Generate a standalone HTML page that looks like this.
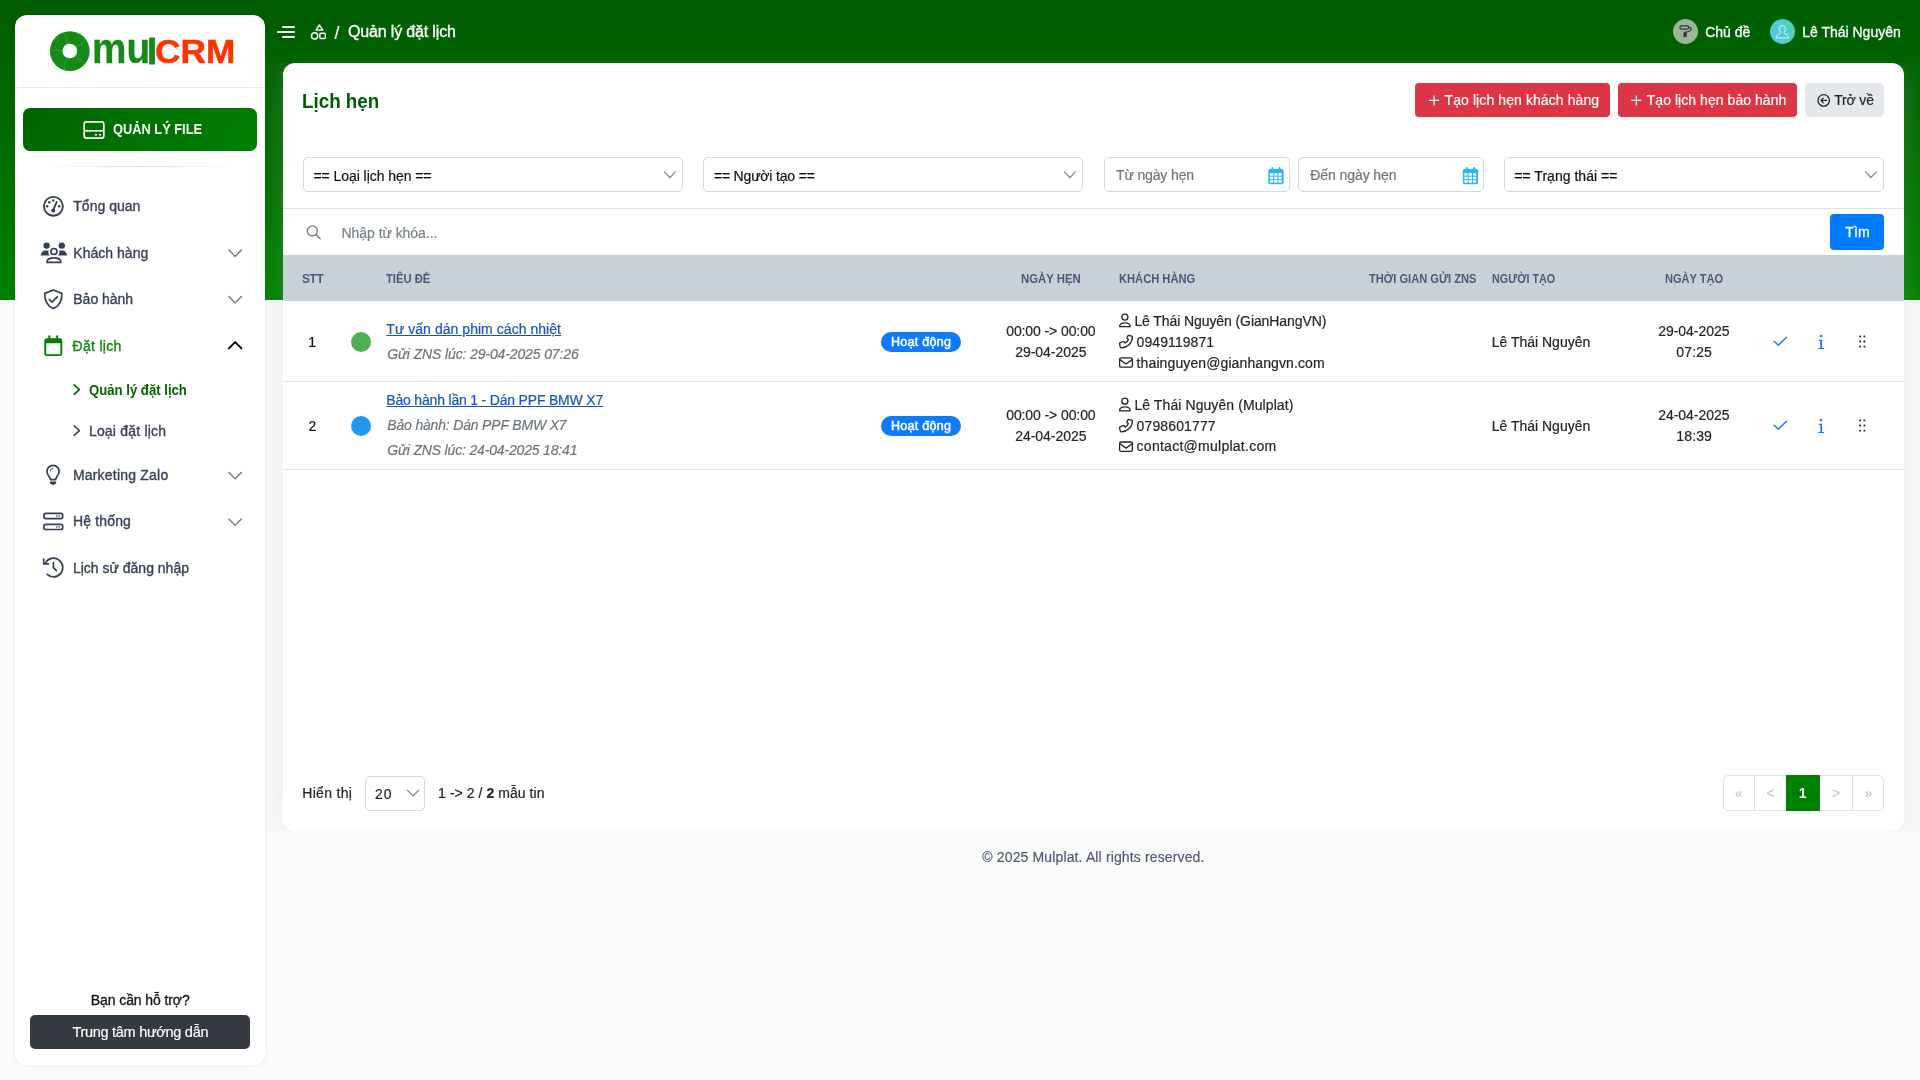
<!DOCTYPE html>
<html lang="vi">
<head>
<meta charset="utf-8">
<title>Quản lý đặt lịch - mulCRM</title>
<style>
html,body{margin:0;padding:0;}
body{width:1920px;height:1080px;overflow:hidden;background:#f8f9fa;position:relative;font-family:"Liberation Sans",sans-serif;}
.t{position:absolute;white-space:nowrap;line-height:20px;font-family:"Liberation Sans", sans-serif;}
.abs{position:absolute;}
#topbg{left:0;top:0;width:1920px;height:300px;background:linear-gradient(180deg,#005c00 0%,#006400 25%,#008000 100%);}
#sidebar{left:15px;top:15px;width:250px;height:1050px;background:#fff;border-radius:12px;box-shadow:0 0 4px 0 rgba(0,0,0,.07);}
#cardclip{left:243px;top:63px;width:1677px;height:768px;overflow:hidden;}
#card{left:40px;top:0;width:1621px;height:768px;background:#fff;border-radius:12px;box-shadow:0 0 32px 0 rgba(185,188,202,.22);}
.hr1{left:15px;top:87px;width:250px;height:1px;background:#e9ecef;}
.hr2{left:39px;top:166px;width:202px;height:1px;background:linear-gradient(90deg,rgba(0,0,0,0),rgba(0,0,0,.12),rgba(0,0,0,0));}
#filebtn{left:23px;top:108px;width:234px;height:43px;border-radius:7px;background:linear-gradient(310deg,#008000 0%,#006400 100%);}
#helpbtn{left:30px;top:1015px;width:220px;height:34px;border-radius:5px;background:#343a40;}
.btn-red{top:83px;height:34px;border-radius:4px;background:#dc3545;}
.btn-gray{left:1805px;top:83px;width:79px;height:34px;border-radius:5px;background:#e4e7ec;}
.inp{top:157px;height:33px;border:1px solid #d3d8de;border-radius:5px;background:#fff;}
.line{background:#dee2e6;height:1px;}
#thead{left:283px;top:255px;width:1621px;height:46.4px;background:#c8d0d8;}
.badge{left:881px;width:80px;height:20px;border-radius:10px;background:#0d7bfc;}
.dot{left:351px;width:20px;height:20px;border-radius:50%;}
#findbtn{left:1830px;top:214px;width:54px;height:36px;border-radius:4px;background:#007bff;}
#psel{left:365px;top:776px;width:58px;height:33px;border:1px solid #d3d8de;border-radius:5px;background:#fff;}
#pager{left:1723px;top:775px;width:159px;height:34px;border:1px solid #dee2e6;border-radius:5px;background:#fff;}
.pv{top:775px;width:1px;height:36px;background:#dee2e6;}
#pcur{left:1786px;top:775px;width:34px;height:36px;background:#008000;}
.av{top:19px;width:25px;height:25px;border-radius:50%;}
svg{position:absolute;overflow:visible;}
</style>
</head>
<body>
<div id="topbg" class="abs"></div>
<div id="cardclip" class="abs"><main id="card" class="abs"></main></div>

<!-- ================= SIDEBAR ================= -->
<aside id="sidebar" class="abs"></aside>
<div class="abs hr1"></div>
<div class="abs hr2"></div>
<div id="filebtn" class="abs"></div>
<div id="helpbtn" class="abs"></div>


<!-- ================= TOP NAV ================= -->
<div class="abs av" style="left:1673px;background:#9bb598;"></div>
<div class="abs av" style="left:1770px;background:linear-gradient(90deg,#4fc6ea 0%,#4fd2b9 100%);"></div>


<!-- ================= MAIN CARD ================= -->
<div class="abs btn-red" style="left:1415px;width:195px;"></div>
<div class="abs btn-red" style="left:1618px;width:179px;"></div>
<div class="abs btn-gray"></div>
<div class="abs inp" style="left:303px;width:378px;"></div>
<div class="abs inp" style="left:703px;width:378px;"></div>
<div class="abs inp" style="left:1103.5px;width:184px;"></div>
<div class="abs inp" style="left:1298px;width:184px;"></div>
<div class="abs inp" style="left:1504px;width:378px;"></div>
<div class="abs line" style="left:283px;top:208px;width:1621px;"></div>
<div id="findbtn" class="abs"></div>
<div id="thead" class="abs"></div>
<div class="abs line" style="left:283px;top:381px;width:1621px;"></div>
<div class="abs line" style="left:283px;top:469px;width:1621px;"></div>
<div class="abs dot" style="top:332px;background:#4caf50;"></div>
<div class="abs dot" style="top:416px;background:#2196f3;"></div>
<div class="abs badge" style="top:332px;"></div>
<div class="abs badge" style="top:416px;"></div>
<div id="psel" class="abs"></div>
<div id="pager" class="abs"></div>
<div class="abs pv" style="left:1754px;"></div>
<div class="abs pv" style="left:1852px;"></div>
<div id="pcur" class="abs"></div>
<svg width="1920" height="1080" viewBox="0 0 1920 1080" style="left:0;top:0;">
<g id="logo">
<circle cx="69.8" cy="51.1" r="19.9" fill="#168a16"/>
<path d="M68.48 43.62 A11 11 0 0 0 85.25 39.03" fill="none" stroke="#7fd07f" stroke-opacity=".55" stroke-width=".5"/>
<path d="M76.51 47.53 A11 11 0 0 0 86.05 62.06" fill="none" stroke="#7fd07f" stroke-opacity=".55" stroke-width=".5"/>
<path d="M75.27 56.38 A11 11 0 0 0 64.40 69.94" fill="none" stroke="#7fd07f" stroke-opacity=".55" stroke-width=".5"/>
<path d="M66.47 57.93 A11 11 0 0 0 50.21 51.78" fill="none" stroke="#7fd07f" stroke-opacity=".55" stroke-width=".5"/>
<path d="M62.27 50.04 A11 11 0 0 0 63.10 32.68" fill="none" stroke="#7fd07f" stroke-opacity=".55" stroke-width=".5"/>
<circle cx="69.8" cy="51" r="7.3" fill="#fff"/>
</g>
<g id="side-icons">
<g fill="none" stroke="#fff" stroke-width="1.7" stroke-linejoin="round"><rect x="84.2" y="121.9" width="19.6" height="16.2" rx="2.2"/><path d="M84.2 130.8H103.8"/></g>
<g fill="#fff"><rect x="94.9" y="133.9" width="2.1" height="1.7" rx=".4"/><rect x="98.9" y="133.9" width="2.1" height="1.7" rx=".4"/></g>
<g fill="none" stroke="#363f56" stroke-width="1.9" stroke-linecap="round"><circle cx="53.4" cy="206.3" r="9.45"/><path d="M53.3 210.2L56.6 202.0"/></g>
<g fill="#363f56"><circle cx="53.2" cy="210.4" r="2"/><circle cx="47.2" cy="206.3" r="1.25"/><circle cx="49.3" cy="202.2" r="1.25"/><circle cx="53.2" cy="200.5" r="1.25"/><circle cx="59.2" cy="206.2" r="1.25"/></g>
<g fill="#363f56"><circle cx="46.6" cy="245.6" r="3.2"/><circle cx="61.8" cy="245.6" r="3.2"/><path d="M40.8 255.6 C40.8 252.4 43 250.4 45.8 250.4 H48.6 C48.2 251.8 48.4 253.8 49.7 255.6 Z"/><path d="M67 255.6 C67 252.4 64.8 250.4 62 250.4 H59.2 C59.6 251.8 59.4 253.8 58.1 255.6 Z"/></g>
<g fill="none" stroke="#363f56" stroke-width="1.7" stroke-linejoin="round"><circle cx="53.9" cy="251.5" r="3"/><path d="M46.9 262.4 C46.9 259.4 49.6 257.8 53.9 257.8 C58.2 257.8 60.9 259.4 60.9 262.4 Z"/></g>
<g fill="none" stroke="#363f56" stroke-width="1.7" stroke-linejoin="round" stroke-linecap="round"><path d="M53.3 290 L61.9 293.4 C62.1 300.5 59 306 53.3 308.6 C47.6 306 44.5 300.5 44.7 293.4 Z"/><path d="M49.3 299.5 L52 302.1 L57.5 296.6"/></g>
<path fill-rule="evenodd" fill="#008000" d="M46.8 338.3 H59.8 A2.5 2.5 0 0 1 62.3 340.8 V353.5 A2.5 2.5 0 0 1 59.8 356 H46.8 A2.5 2.5 0 0 1 44.3 353.5 V340.8 A2.5 2.5 0 0 1 46.8 338.3 Z M46.2 343.2 V353.4 A.8 .8 0 0 0 47 354.2 H59.6 A.8 .8 0 0 0 60.4 353.4 V343.2 Z"/>
<g stroke="#008000" stroke-width="1.9" stroke-linecap="round"><path d="M49.3 336.2V339"/><path d="M57.2 336.2V339"/></g>
<g fill="none" stroke="#363f56" stroke-width="1.7" stroke-linejoin="round" stroke-linecap="round"><path d="M50.4 479.6 C50.4 476.8 47 475.4 47 471.4 A6.05 6.05 0 0 1 59.1 471.4 C59.1 475.4 55.7 476.8 55.7 479.6 Z"/></g>
<path fill="none" stroke="#363f56" stroke-width="1.0" stroke-linecap="round" d="M50.2 471.2 A2.9 2.9 0 0 1 53 468.4"/>
<path fill="#363f56" d="M49.8 481.6 H56.3 C56.3 483.8 54.9 484.9 53.05 484.9 C51.2 484.9 49.8 483.8 49.8 481.6 Z"/>
<g fill="none" stroke="#363f56" stroke-width="1.7"><rect x="43.9" y="513.4" width="18.8" height="5.2" rx="2"/><rect x="43.9" y="524.3" width="18.8" height="5.2" rx="2"/></g>
<g fill="#363f56"><rect x="56" y="515.4" width="1.6" height="1.2"/><rect x="58.4" y="515.4" width="1.6" height="1.2"/><rect x="56" y="526.3" width="1.6" height="1.2"/><rect x="58.4" y="526.3" width="1.6" height="1.2"/></g>
<g fill="none" stroke="#363f56" stroke-width="1.7" stroke-linecap="round" stroke-linejoin="round"><path d="M45.6 562.6 A9.3 9.3 0 1 1 47.2 574.4"/><path d="M43.7 559.2 V563.9 H48.4"/><path d="M53.4 562.7 V567.6 L56.4 570.6"/></g>
<path d="M228.90 250.10 L235.15 256.40 L241.40 250.10" fill="none" stroke="#747a81" stroke-width="1.4" stroke-linecap="round" stroke-linejoin="round"/>
<path d="M228.90 296.60 L235.15 302.90 L241.40 296.60" fill="none" stroke="#747a81" stroke-width="1.4" stroke-linecap="round" stroke-linejoin="round"/>
<path d="M228.90 472.40 L235.15 478.70 L241.40 472.40" fill="none" stroke="#747a81" stroke-width="1.4" stroke-linecap="round" stroke-linejoin="round"/>
<path d="M228.90 518.90 L235.15 525.20 L241.40 518.90" fill="none" stroke="#747a81" stroke-width="1.4" stroke-linecap="round" stroke-linejoin="round"/>
<path d="M228.90 348.40 L235.15 342.10 L241.40 348.40" fill="none" stroke="#000" stroke-width="1.9" stroke-linecap="round" stroke-linejoin="round"/>
<path d="M74.20 384.80 L79.40 389.60 L74.20 394.40" fill="none" stroke="#006400" stroke-width="1.6" stroke-linecap="round" stroke-linejoin="round"/>
<path d="M74.20 425.80 L79.40 430.60 L74.20 435.40" fill="none" stroke="#363f56" stroke-width="1.5" stroke-linecap="round" stroke-linejoin="round"/>
</g>
<g id="top-icons">
<g stroke="#fff" stroke-width="2" stroke-linecap="round"><path d="M283 26.9H294"/><path d="M278 31.9H294"/><path d="M283 36.9H294"/></g>
<g fill="none" stroke="#fff" stroke-width="1.45" stroke-linejoin="round"><path d="M319.4 24.9 L322.8 30.1 H316 Z"/><circle cx="314.6" cy="35.9" r="3.1"/><rect x="319.9" y="33.2" width="5.4" height="5.2" rx="1"/></g>
<g fill="none" stroke="#343a40" stroke-width="1.3" stroke-linejoin="round" stroke-linecap="round"><rect x="1680" y="25.8" width="8.6" height="3.4" rx="1.5"/><path d="M1688.6 27.3 C1691.2 27.3 1691.2 28.2 1691 30 C1690.8 31.4 1689 31.6 1685.1 32.2"/></g>
<rect x="1683.4" y="32.2" width="3.4" height="4.9" rx=".9" fill="#343a40"/>
<path fill="none" stroke="#fff" stroke-width=".8" stroke-linejoin="round" d="M1776.3 37.9 V36.6 C1776.3 35.2 1778 34.6 1780.2 33.6 C1780.8 33.3 1780.8 32.4 1780.4 31.9 C1779.6 30.9 1779.3 29.9 1779.3 28.7 A3.05 3.05 0 0 1 1785.4 28.7 C1785.4 29.9 1785.1 30.9 1784.3 31.9 C1783.9 32.4 1783.9 33.3 1784.5 33.6 C1786.7 34.6 1788.4 35.2 1788.4 36.6 V37.9 Z"/>
</g>
<g id="card-icons">
<path d="M1429.1 100.4H1439.1M1434.1 95.4V105.4" stroke="#fff" stroke-width="1.15" fill="none"/>
<path d="M1631.3 100.4H1641.3M1636.3 95.4V105.4" stroke="#fff" stroke-width="1.15" fill="none"/>
<g fill="none" stroke="#212529" stroke-width="1.3" stroke-linecap="round" stroke-linejoin="round"><circle cx="1823.7" cy="100.4" r="5.7"/><path d="M1826.6 100.4H1821M1823.2 98.1L1820.9 100.4L1823.2 102.7"/></g>
<path d="M664.40 171.90 L669.90 177.50 L675.40 171.90" fill="none" stroke="#80868d" stroke-width="1.2" stroke-linecap="round" stroke-linejoin="round"/>
<path d="M1064.40 171.90 L1069.90 177.50 L1075.40 171.90" fill="none" stroke="#80868d" stroke-width="1.2" stroke-linecap="round" stroke-linejoin="round"/>
<path d="M1865.40 171.90 L1870.90 177.50 L1876.40 171.90" fill="none" stroke="#80868d" stroke-width="1.2" stroke-linecap="round" stroke-linejoin="round"/>
<path d="M407.60 790.20 L413.10 796.00 L418.60 790.20" fill="none" stroke="#868c93" stroke-width="1.25" stroke-linecap="round" stroke-linejoin="round"/>
<g transform="translate(1268.3 167)"><rect x="0" y="2" width="15.3" height="15.3" rx="1.8" fill="#29b6f6"/><rect x="3.1" y="0" width="1.9" height="4" rx=".9" fill="#29b6f6"/><rect x="10.3" y="0" width="1.9" height="4" rx=".9" fill="#29b6f6"/><rect x="1.60" y="6.20" width="3.3" height="2.5" fill="#fff"/><rect x="5.85" y="6.20" width="3.3" height="2.5" fill="#fff"/><rect x="10.10" y="6.20" width="3.3" height="2.5" fill="#fff"/><rect x="1.60" y="9.70" width="3.3" height="2.5" fill="#fff"/><rect x="5.85" y="9.70" width="3.3" height="2.5" fill="#fff"/><rect x="10.10" y="9.70" width="3.3" height="2.5" fill="#fff"/><rect x="1.60" y="13.20" width="3.3" height="2.5" fill="#fff"/><rect x="5.85" y="13.20" width="3.3" height="2.5" fill="#fff"/><rect x="10.10" y="13.20" width="3.3" height="2.5" fill="#fff"/></g>
<g transform="translate(1462.8 167)"><rect x="0" y="2" width="15.3" height="15.3" rx="1.8" fill="#29b6f6"/><rect x="3.1" y="0" width="1.9" height="4" rx=".9" fill="#29b6f6"/><rect x="10.3" y="0" width="1.9" height="4" rx=".9" fill="#29b6f6"/><rect x="1.60" y="6.20" width="3.3" height="2.5" fill="#fff"/><rect x="5.85" y="6.20" width="3.3" height="2.5" fill="#fff"/><rect x="10.10" y="6.20" width="3.3" height="2.5" fill="#fff"/><rect x="1.60" y="9.70" width="3.3" height="2.5" fill="#fff"/><rect x="5.85" y="9.70" width="3.3" height="2.5" fill="#fff"/><rect x="10.10" y="9.70" width="3.3" height="2.5" fill="#fff"/><rect x="1.60" y="13.20" width="3.3" height="2.5" fill="#fff"/><rect x="5.85" y="13.20" width="3.3" height="2.5" fill="#fff"/><rect x="10.10" y="13.20" width="3.3" height="2.5" fill="#fff"/></g>
<g fill="none" stroke="#6c757d" stroke-width="1.35" stroke-linecap="round"><circle cx="312.3" cy="230.9" r="5"/><path d="M315.9 234.6L320.2 238.7"/></g>
<g transform="translate(0 0)" fill="none" stroke="#212529" stroke-width="1.3" stroke-linejoin="round" stroke-linecap="round"><circle cx="1124.9" cy="317.1" r="3"/><path d="M1119.6 326.7 C1119.6 324 1121.6 322.8 1124.9 322.8 C1128.2 322.8 1130.2 324 1130.2 326.7 Z"/><path d="M1128.2 335.3 L1131.8 336.1 C1132.3 336.2 1132.5 336.6 1132.5 337 C1132.3 343.2 1127 347.7 1121.2 347.8 C1120.7 347.8 1120.4 347.5 1120.3 347.1 L1119.6 343.8 C1119.5 343.3 1119.7 342.9 1120.2 342.7 L1123.1 341.5 C1123.5 341.3 1124 341.4 1124.3 341.8 L1125.2 343 C1126.6 342.2 1127.7 341 1128.4 339.6 L1127.3 338.7 C1126.9 338.4 1126.8 337.9 1127 337.5 L1127.1 337.3 L1128.2 335.3 Z" transform="translate(0 0)"/><rect x="1119.6" y="357.9" width="12.8" height="9.3" rx="1.6"/><path d="M1119.9 359.6 L1126 364 L1132.1 359.6"/></g>
<g transform="translate(0 84.1)" fill="none" stroke="#212529" stroke-width="1.3" stroke-linejoin="round" stroke-linecap="round"><circle cx="1124.9" cy="317.1" r="3"/><path d="M1119.6 326.7 C1119.6 324 1121.6 322.8 1124.9 322.8 C1128.2 322.8 1130.2 324 1130.2 326.7 Z"/><path d="M1128.2 335.3 L1131.8 336.1 C1132.3 336.2 1132.5 336.6 1132.5 337 C1132.3 343.2 1127 347.7 1121.2 347.8 C1120.7 347.8 1120.4 347.5 1120.3 347.1 L1119.6 343.8 C1119.5 343.3 1119.7 342.9 1120.2 342.7 L1123.1 341.5 C1123.5 341.3 1124 341.4 1124.3 341.8 L1125.2 343 C1126.6 342.2 1127.7 341 1128.4 339.6 L1127.3 338.7 C1126.9 338.4 1126.8 337.9 1127 337.5 L1127.1 337.3 L1128.2 335.3 Z" transform="translate(0 0)"/><rect x="1119.6" y="357.9" width="12.8" height="9.3" rx="1.6"/><path d="M1119.9 359.6 L1126 364 L1132.1 359.6"/></g>
<g transform="translate(0 0)"><path d="M1774.2 341.3 L1778.3 345.3 L1786.5 337.2" fill="none" stroke="#0d7bfc" stroke-width="1.4" stroke-linecap="round" stroke-linejoin="round"/><circle cx="1821.1" cy="336.1" r="1.3" fill="#0d7bfc"/><path d="M1818.9 339.8 H1822 V347.9 H1824 V349 H1818.3 V347.9 H1820.3 V340.9 H1818.9 Z" fill="#0d7bfc"/><rect x="1859.2" y="335.4" width="1.8" height="1.8" rx=".5" fill="#222"/><rect x="1859.2" y="340.6" width="1.8" height="1.8" rx=".5" fill="#222"/><rect x="1859.2" y="345.7" width="1.8" height="1.8" rx=".5" fill="#222"/><rect x="1863.5" y="335.4" width="1.8" height="1.8" rx=".5" fill="#222"/><rect x="1863.5" y="340.6" width="1.8" height="1.8" rx=".5" fill="#222"/><rect x="1863.5" y="345.7" width="1.8" height="1.8" rx=".5" fill="#222"/></g>
<g transform="translate(0 84)"><path d="M1774.2 341.3 L1778.3 345.3 L1786.5 337.2" fill="none" stroke="#0d7bfc" stroke-width="1.4" stroke-linecap="round" stroke-linejoin="round"/><circle cx="1821.1" cy="336.1" r="1.3" fill="#0d7bfc"/><path d="M1818.9 339.8 H1822 V347.9 H1824 V349 H1818.3 V347.9 H1820.3 V340.9 H1818.9 Z" fill="#0d7bfc"/><rect x="1859.2" y="335.4" width="1.8" height="1.8" rx=".5" fill="#222"/><rect x="1859.2" y="340.6" width="1.8" height="1.8" rx=".5" fill="#222"/><rect x="1859.2" y="345.7" width="1.8" height="1.8" rx=".5" fill="#222"/><rect x="1863.5" y="335.4" width="1.8" height="1.8" rx=".5" fill="#222"/><rect x="1863.5" y="340.6" width="1.8" height="1.8" rx=".5" fill="#222"/><rect x="1863.5" y="345.7" width="1.8" height="1.8" rx=".5" fill="#222"/></g>
</g>
</svg>

<!-- ================= TEXT ================= -->
<div id="txt" class="abs" style="left:0;top:0;width:1920px;height:1080px;will-change:transform;">
<div id="logotext" style="position:absolute;left:0;top:0;"><span style="position:absolute;left:92.00px;top:19.04px;line-height:60px;font-size:42.3px;font-weight:700;color:#168a16;-webkit-text-stroke:0.3px #168a16;transform:scaleX(0.915);transform-origin:0 50%;white-space:nowrap;">mu</span><span style="position:absolute;left:147.30px;top:21.54px;line-height:60px;font-size:35.1px;font-weight:700;color:#168a16;-webkit-text-stroke:0.9px #168a16;transform:scaleX(1.0);transform-origin:0 50%;white-space:nowrap;">l</span><span style="position:absolute;left:154.60px;top:22.13px;line-height:60px;font-size:33.4px;font-weight:700;color:#ff3300;-webkit-text-stroke:0.5px #ff3300;transform:scaleX(1.055);transform-origin:0 50%;white-space:nowrap;">CRM</span></div>
<span class="t" style="left:348.00px;top:22.46px;font-size:16px;color:#fff;-webkit-text-stroke:0.35px #fff;letter-spacing:-0.160px;">Quản lý đặt lịch</span>
<span class="t" style="left:334.56px;top:22.64px;font-size:17.5px;color:#fff;-webkit-text-stroke:0.2px #fff;">/</span>
<span class="t" style="left:1705.30px;top:21.85px;font-size:14px;color:#fff;-webkit-text-stroke:0.3px #fff;letter-spacing:-0.047px;">Chủ đề</span>
<span class="t" style="left:1802.30px;top:21.85px;font-size:14px;color:#fff;-webkit-text-stroke:0.3px #fff;letter-spacing:-0.014px;">Lê Thái Nguyên</span>
<span class="t" style="left:302.00px;top:90.57px;font-size:20px;color:#005c00;font-weight:700;transform:scaleX(0.9400);transform-origin:0 50%;">Lịch hẹn</span>
<span class="t" style="left:1444.50px;top:90.35px;font-size:14px;color:#fff;-webkit-text-stroke:0.2px #fff;letter-spacing:0.095px;">Tạo lịch hẹn khách hàng</span>
<span class="t" style="left:1646.70px;top:90.35px;font-size:14px;color:#fff;-webkit-text-stroke:0.2px #fff;letter-spacing:0.055px;">Tạo lịch hẹn bảo hành</span>
<span class="t" style="left:1834.20px;top:90.15px;font-size:14px;color:#212529;-webkit-text-stroke:0.2px #212529;letter-spacing:-0.157px;">Trở về</span>
<span class="t" style="left:313.50px;top:165.95px;font-size:14px;color:#111;-webkit-text-stroke:0.2px #111;letter-spacing:-0.060px;">== Loại lịch hẹn ==</span>
<span class="t" style="left:713.90px;top:165.95px;font-size:14px;color:#111;-webkit-text-stroke:0.2px #111;letter-spacing:-0.173px;">== Người tạo ==</span>
<span class="t" style="left:1116.00px;top:165.45px;font-size:14px;color:#6c757d;-webkit-text-stroke:0.2px #6c757d;letter-spacing:-0.135px;">Từ ngày hẹn</span>
<span class="t" style="left:1310.30px;top:165.45px;font-size:14px;color:#6c757d;-webkit-text-stroke:0.2px #6c757d;letter-spacing:-0.086px;">Đến ngày hẹn</span>
<span class="t" style="left:1514.30px;top:165.95px;font-size:14px;color:#111;-webkit-text-stroke:0.2px #111;letter-spacing:0.023px;">== Trạng thái ==</span>
<span class="t" style="left:341.50px;top:222.65px;font-size:14px;color:#76808c;-webkit-text-stroke:0.2px #76808c;letter-spacing:-0.045px;">Nhập từ khóa...</span>
<span class="t" style="left:1845.30px;top:222.15px;font-size:14px;color:#fff;-webkit-text-stroke:0.3px #fff;letter-spacing:0.116px;">Tìm</span>
<span class="t" style="left:301.90px;top:268.84px;font-size:12px;color:#4b5a78;font-weight:700;letter-spacing:-0.389px;">STT</span>
<span class="t" style="left:386.40px;top:268.84px;font-size:12px;color:#4b5a78;font-weight:700;transform:scaleX(0.9336);transform-origin:0 50%;">TIÊU ĐỀ</span>
<span class="t" style="left:1021.20px;top:268.84px;font-size:12px;color:#4b5a78;font-weight:700;transform:scaleX(0.9457);transform-origin:0 50%;">NGÀY HẸN</span>
<span class="t" style="left:1118.60px;top:268.84px;font-size:12px;color:#4b5a78;font-weight:700;transform:scaleX(0.9293);transform-origin:0 50%;">KHÁCH HÀNG</span>
<span class="t" style="left:1369.00px;top:268.84px;font-size:12px;color:#4b5a78;font-weight:700;transform:scaleX(0.9251);transform-origin:0 50%;">THỜI GIAN GỬI ZNS</span>
<span class="t" style="left:1491.90px;top:268.84px;font-size:12px;color:#4b5a78;font-weight:700;transform:scaleX(0.9002);transform-origin:0 50%;">NGƯỜI TẠO</span>
<span class="t" style="left:1665.00px;top:268.84px;font-size:12px;color:#4b5a78;font-weight:700;transform:scaleX(0.9220);transform-origin:0 50%;">NGÀY TẠO</span>
<span class="t" style="left:308.15px;top:331.85px;font-size:14px;color:#111;-webkit-text-stroke:0.2px #111;">1</span>
<span class="t" style="left:386.30px;top:319.35px;font-size:14px;color:#1553c7;-webkit-text-stroke:0.2px #1553c7;letter-spacing:0.044px;text-decoration:underline;">Tư vấn dán phim cách nhiệt</span>
<span class="t" style="left:387.30px;top:343.85px;font-size:14px;color:#6c757d;font-style:italic;-webkit-text-stroke:0.2px #6c757d;letter-spacing:-0.122px;">Gửi ZNS lúc: 29-04-2025 07:26</span>
<span class="t" style="left:890.88px;top:331.97px;font-size:12.5px;color:#fff;-webkit-text-stroke:0.5px #fff;letter-spacing:0.301px;">Hoạt động</span>
<span class="t" style="left:1006.20px;top:321.35px;font-size:14px;color:#212529;-webkit-text-stroke:0.2px #212529;letter-spacing:-0.095px;">00:00 -&gt; 00:00</span>
<span class="t" style="left:1015.30px;top:342.15px;font-size:14px;color:#212529;-webkit-text-stroke:0.2px #212529;letter-spacing:-0.055px;">29-04-2025</span>
<span class="t" style="left:1134.40px;top:310.75px;font-size:14px;color:#212529;-webkit-text-stroke:0.2px #212529;letter-spacing:-0.090px;">Lê Thái Nguyên (GianHangVN)</span>
<span class="t" style="left:1136.60px;top:331.55px;font-size:14px;color:#212529;-webkit-text-stroke:0.2px #212529;letter-spacing:0.081px;">0949119871</span>
<span class="t" style="left:1136.60px;top:352.65px;font-size:14px;color:#212529;-webkit-text-stroke:0.2px #212529;letter-spacing:0.108px;">thainguyen@gianhangvn.com</span>
<span class="t" style="left:1491.80px;top:332.45px;font-size:14px;color:#212529;-webkit-text-stroke:0.2px #212529;letter-spacing:-0.014px;">Lê Thái Nguyên</span>
<span class="t" style="left:1658.20px;top:321.25px;font-size:14px;color:#212529;-webkit-text-stroke:0.2px #212529;letter-spacing:-0.024px;">29-04-2025</span>
<span class="t" style="left:1676.30px;top:342.05px;font-size:14px;color:#212529;-webkit-text-stroke:0.2px #212529;letter-spacing:0.145px;">07:25</span>
<span class="t" style="left:308.60px;top:415.95px;font-size:14px;color:#111;-webkit-text-stroke:0.2px #111;">2</span>
<span class="t" style="left:386.30px;top:390.45px;font-size:14px;color:#1553c7;-webkit-text-stroke:0.2px #1553c7;letter-spacing:-0.186px;text-decoration:underline;">Bảo hành lần 1 - Dán PPF BMW X7</span>
<span class="t" style="left:387.30px;top:415.15px;font-size:14px;color:#6c757d;font-style:italic;-webkit-text-stroke:0.2px #6c757d;letter-spacing:-0.178px;">Bảo hành: Dán PPF BMW X7</span>
<span class="t" style="left:387.30px;top:440.15px;font-size:14px;color:#6c757d;font-style:italic;-webkit-text-stroke:0.2px #6c757d;letter-spacing:-0.168px;">Gửi ZNS lúc: 24-04-2025 18:41</span>
<span class="t" style="left:890.88px;top:415.97px;font-size:12.5px;color:#fff;-webkit-text-stroke:0.5px #fff;letter-spacing:0.301px;">Hoạt động</span>
<span class="t" style="left:1006.20px;top:405.45px;font-size:14px;color:#212529;-webkit-text-stroke:0.2px #212529;letter-spacing:-0.095px;">00:00 -&gt; 00:00</span>
<span class="t" style="left:1015.30px;top:426.15px;font-size:14px;color:#212529;-webkit-text-stroke:0.2px #212529;letter-spacing:-0.055px;">24-04-2025</span>
<span class="t" style="left:1134.40px;top:394.85px;font-size:14px;color:#212529;-webkit-text-stroke:0.2px #212529;letter-spacing:0.088px;">Lê Thái Nguyên (Mulplat)</span>
<span class="t" style="left:1136.60px;top:415.65px;font-size:14px;color:#212529;-webkit-text-stroke:0.2px #212529;letter-spacing:0.129px;">0798601777</span>
<span class="t" style="left:1136.60px;top:436.35px;font-size:14px;color:#212529;-webkit-text-stroke:0.2px #212529;letter-spacing:0.263px;">contact@mulplat.com</span>
<span class="t" style="left:1491.80px;top:415.95px;font-size:14px;color:#212529;-webkit-text-stroke:0.2px #212529;letter-spacing:-0.014px;">Lê Thái Nguyên</span>
<span class="t" style="left:1658.20px;top:405.45px;font-size:14px;color:#212529;-webkit-text-stroke:0.2px #212529;letter-spacing:-0.024px;">24-04-2025</span>
<span class="t" style="left:1676.30px;top:426.25px;font-size:14px;color:#212529;-webkit-text-stroke:0.2px #212529;letter-spacing:0.145px;">18:39</span>
<span class="t" style="left:302.30px;top:783.45px;font-size:14px;color:#212529;-webkit-text-stroke:0.2px #212529;letter-spacing:0.297px;">Hiển thị</span>
<span class="t" style="left:375.10px;top:783.95px;font-size:14px;color:#212529;-webkit-text-stroke:0.2px #212529;letter-spacing:0.815px;">20</span>
<span class="t" style="left:438.10px;top:783.45px;font-size:14px;color:#212529;-webkit-text-stroke:0.2px #212529;letter-spacing:0.053px;">1 -&gt; 2 / <b>2</b> mẫu tin</span>
<span class="t" style="left:1734.70px;top:782.65px;font-size:14px;color:#bcc2ca;-webkit-text-stroke:0.001px #bcc2ca;">«</span>
<span class="t" style="left:1766.61px;top:782.65px;font-size:14px;color:#bcc2ca;-webkit-text-stroke:0.001px #bcc2ca;">&lt;</span>
<span class="t" style="left:1798.70px;top:783.15px;font-size:14px;color:#fff;font-weight:700;">1</span>
<span class="t" style="left:1831.91px;top:782.65px;font-size:14px;color:#bcc2ca;-webkit-text-stroke:0.001px #bcc2ca;">&gt;</span>
<span class="t" style="left:1864.40px;top:782.65px;font-size:14px;color:#bcc2ca;-webkit-text-stroke:0.001px #bcc2ca;">»</span>
<span class="t" style="left:982.30px;top:847.15px;font-size:14px;color:#4a5873;-webkit-text-stroke:0.15px #4a5873;letter-spacing:0.138px;">© 2025 Mulplat. All rights reserved.</span>
<span class="t" style="left:113.42px;top:119.33px;font-size:15.5px;color:#fff;font-weight:700;transform:scaleX(0.8273);transform-origin:0 50%;">QUẢN LÝ FILE</span>
<span class="t" style="left:73.30px;top:196.45px;font-size:14px;color:#363f56;-webkit-text-stroke:0.35px #363f56;letter-spacing:0.006px;">Tổng quan</span>
<span class="t" style="left:73.30px;top:242.95px;font-size:14px;color:#363f56;-webkit-text-stroke:0.35px #363f56;letter-spacing:0.028px;">Khách hàng</span>
<span class="t" style="left:73.30px;top:289.25px;font-size:14px;color:#363f56;-webkit-text-stroke:0.35px #363f56;letter-spacing:-0.020px;">Bảo hành</span>
<span class="t" style="left:72.60px;top:335.75px;font-size:14px;color:#0a8a0a;-webkit-text-stroke:0.35px #0a8a0a;letter-spacing:0.295px;">Đặt lịch</span>
<span class="t" style="left:88.60px;top:380.15px;font-size:14px;color:#006400;font-weight:700;transform:scaleX(0.9391);transform-origin:0 50%;">Quản lý đặt lịch</span>
<span class="t" style="left:88.90px;top:420.75px;font-size:14px;color:#363f56;-webkit-text-stroke:0.35px #363f56;letter-spacing:0.199px;">Loại đặt lịch</span>
<span class="t" style="left:72.90px;top:464.75px;font-size:14px;color:#363f56;-webkit-text-stroke:0.35px #363f56;letter-spacing:0.208px;">Marketing Zalo</span>
<span class="t" style="left:72.90px;top:511.25px;font-size:14px;color:#363f56;-webkit-text-stroke:0.35px #363f56;letter-spacing:0.170px;">Hệ thống</span>
<span class="t" style="left:72.90px;top:557.65px;font-size:14px;color:#363f56;-webkit-text-stroke:0.35px #363f56;letter-spacing:0.005px;">Lịch sử đăng nhập</span>
<span class="t" style="left:90.80px;top:989.55px;font-size:14px;color:#111;-webkit-text-stroke:0.3px #111;letter-spacing:-0.093px;">Bạn cần hỗ trợ?</span>
<span class="t" style="left:72.48px;top:1022.18px;font-size:14.5px;color:#fff;-webkit-text-stroke:0.15px #fff;letter-spacing:-0.289px;">Trung tâm hướng dẫn</span>
</div>
</body>
</html>
